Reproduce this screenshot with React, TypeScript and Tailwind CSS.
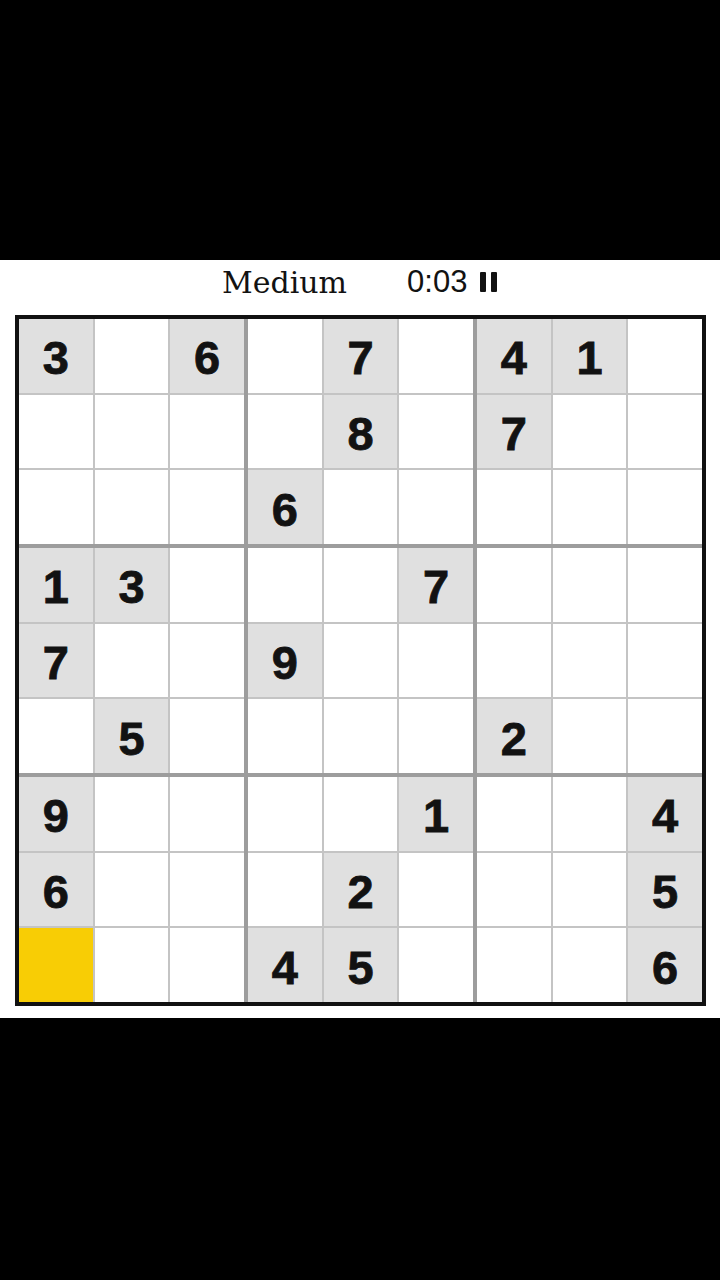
import React from "react";

type Cell = { value: number | null; active?: boolean };

// 0 = empty
const PUZZLE: number[][] = [
  [3, 0, 6, 0, 7, 0, 4, 1, 0],
  [0, 0, 0, 0, 8, 0, 7, 0, 0],
  [0, 0, 0, 6, 0, 0, 0, 0, 0],
  [1, 3, 0, 0, 0, 7, 0, 0, 0],
  [7, 0, 0, 9, 0, 0, 0, 0, 0],
  [0, 5, 0, 0, 0, 0, 2, 0, 0],
  [9, 0, 0, 0, 0, 1, 0, 0, 4],
  [6, 0, 0, 0, 2, 0, 0, 0, 5],
  [0, 0, 0, 4, 5, 0, 0, 0, 6],
];

const SELECTED = { row: 8, col: 0 };

function cellAt(row: number, col: number): Cell {
  const v = PUZZLE[row][col];
  return {
    value: v === 0 ? null : v,
    active: row === SELECTED.row && col === SELECTED.col,
  };
}

function SudokuCell({ cell }: { cell: Cell }) {
  let bg = "bg-white";
  if (cell.active) bg = "bg-[#f8cd05]";
  else if (cell.value) bg = "bg-[#e0e0e0]";

  return (
    <div
      className={`${bg} flex items-center justify-center pt-[4px] text-[47px] font-bold leading-none text-[#121212] [-webkit-text-stroke:0.8px_#121212]`}
      style={{ fontFamily: '"Liberation Sans", Arial, sans-serif' }}
    >
      {cell.value ?? ""}
    </div>
  );
}

function Box({ boxRow, boxCol }: { boxRow: number; boxCol: number }) {
  const cells = [];
  for (let r = 0; r < 3; r++) {
    for (let c = 0; c < 3; c++) {
      const row = boxRow * 3 + r;
      const col = boxCol * 3 + c;
      cells.push(<SudokuCell key={`${row}-${col}`} cell={cellAt(row, col)} />);
    }
  }
  return (
    <div className="grid grid-cols-3 grid-rows-3 gap-[2px] bg-[#c4c4c4]">
      {cells}
    </div>
  );
}

function PauseIcon() {
  return (
    <svg width="18" height="20" viewBox="0 0 18 20" className="block">
      <rect x="0" y="0" width="6" height="20" rx="1" fill="#121212" />
      <rect x="11" y="0" width="6" height="20" rx="1" fill="#121212" />
    </svg>
  );
}

export default function App() {
  return (
    <div className="flex h-[1280px] w-[720px] flex-col bg-black">
      <div className="h-[260px] shrink-0" />
      <div className="h-[758px] shrink-0 bg-white">
        <div className="flex h-[44px] items-center pl-[222px]">
          <span
            className="text-[30px] text-[#121212]"
            style={{ fontFamily: '"DejaVu Serif", "Liberation Serif", serif' }}
          >
            Medium
          </span>
          <span
            className="ml-[60px] text-[31px] text-[#121212]"
            style={{ fontFamily: '"Liberation Sans", Arial, sans-serif' }}
          >
            0:03
          </span>
          <span className="ml-[13px]">
            <PauseIcon />
          </span>
        </div>
        <div className="ml-[15px] mt-[11px] h-[691px] w-[691px] border-[4px] border-[#111111]">
          <div className="grid h-full w-full grid-cols-3 grid-rows-3 gap-[4px] bg-[#9d9d9d]">
            {[0, 1, 2].map((br) =>
              [0, 1, 2].map((bc) => <Box key={`${br}-${bc}`} boxRow={br} boxCol={bc} />)
            )}
          </div>
        </div>
      </div>
      <div className="flex-1" />
    </div>
  );
}
